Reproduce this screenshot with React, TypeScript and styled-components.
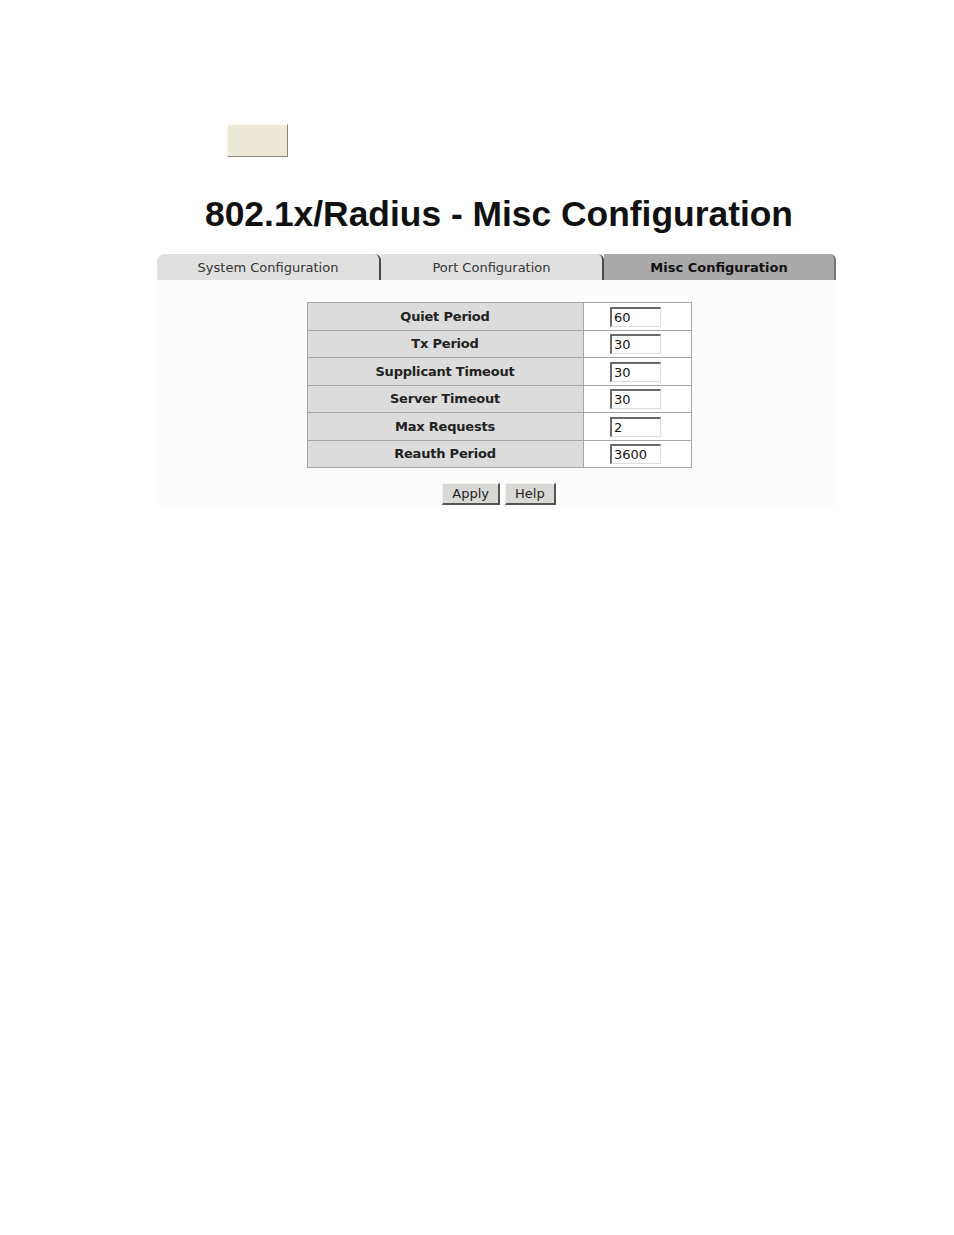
import styled, { createGlobalStyle } from "styled-components";

const Global = createGlobalStyle`
    body {
        margin: 0;
        background: #ffffff;
        font-family: "DejaVu Sans", Verdana, sans-serif;
    }
`;

const Page = styled.div`
    width: 954px;
    height: 1235px;
    padding-top: 124px;
    box-sizing: border-box;
`;

const TopButton = styled.div`
    margin-left: 227px;
    width: 61px;
    height: 33px;
    box-sizing: border-box;
    background: #ece9d8;
    border: 1px solid #f6f5ee;
    border-right-color: #8a877a;
    border-bottom-color: #8a877a;
`;

const Content = styled.div`
    margin-left: 157px;
    width: 680px;
    display: flex;
    flex-direction: column;
    align-items: center;
`;

const Title = styled.h1`
    margin: 33px 0 0 4px;
    height: 48px;
    font-family: "Liberation Sans", Arial, sans-serif;
    font-size: 35.4px;
    font-weight: 700;
    color: #111;
    line-height: 48px;
`;

const Tabs = styled.div`
    margin-top: 16px;
    width: 680px;
    display: flex;
`;

const Tab = styled.div<{ $active?: boolean; $first?: boolean }>`
    position: relative;
    flex: 0 0 ${(p) => (p.$first ? 224 : p.$active ? 232 : 223)}px;
    height: 26px;
    box-sizing: border-box;
    background: ${(p) => (p.$active ? "#a9a9a9" : "#e0e0e0")};
    border-top-left-radius: ${(p) => (p.$first ? "8px" : "0")};
    border-top-right-radius: 6px;
    border-right: 2px solid ${(p) => (p.$active ? "#777" : "#4a4a4a")};
    font-size: 13px;
    font-weight: ${(p) => (p.$active ? 700 : 400)};
    color: ${(p) => (p.$active ? "#111" : "#333")};
    display: flex;
    align-items: center;
    justify-content: center;
    padding-top: 1px;
`;

const Panel = styled.div`
    width: 680px;
    background: #fcfcfc;
    display: flex;
    flex-direction: column;
    align-items: center;
    padding: 22px 0 0;
    height: 226px;
    box-sizing: border-box;
`;

const Table = styled.table`
    margin-left: 4px;
    border-collapse: collapse;
    border: 1px solid #a6a6a6;
`;

const Row = styled.tr`
    height: 27.5px;
    border-bottom: 1px solid #a6a6a6;
`;

const Label = styled.td`
    width: 275px;
    padding: 0;
    background: #dcdcdc;
    border-right: 1px solid #a6a6a6;
    text-align: center;
    font-size: 13px;
    font-weight: 700;
    letter-spacing: -0.2px;
    color: #222;
`;

const Value = styled.td`
    width: 107px;
    padding: 0;
    background: #fff;
    text-align: center;
`;

const Field = styled.input`
    width: 51px;
    height: 20px;
    box-sizing: border-box;
    padding: 0 0 0 2px;
    margin: 0 0 0 -3px;
    border: 1px solid #dcdcdc;
    border-top: 2px solid #6a6a6a;
    border-left: 2px solid #6a6a6a;
    font-family: "DejaVu Sans", Verdana, sans-serif;
    font-size: 13px;
    color: #111;
    background: #fff;
    vertical-align: middle;
`;

const Buttons = styled.div`
    margin: 15px 0 0 4px;
    display: flex;
    gap: 5px;
`;

const Button = styled.button`
    height: 22px;
    padding: 0 9px;
    box-sizing: border-box;
    background: #d8d8d4;
    border: 1px solid #f2f2f2;
    border-right: 2px solid #555;
    border-bottom: 2px solid #555;
    font-family: "DejaVu Sans", Verdana, sans-serif;
    font-size: 13px;
    color: #222;
`;

const rows = [
    ["Quiet Period", "60"],
    ["Tx Period", "30"],
    ["Supplicant Timeout", "30"],
    ["Server Timeout", "30"],
    ["Max Requests", "2"],
    ["Reauth Period", "3600"],
];

export default function App() {
    return (
        <Page>
            <Global />
            <TopButton />
            <Content>
                <Title>802.1x/Radius - Misc Configuration</Title>
                <Tabs>
                    <Tab $first>System Configuration</Tab>
                    <Tab>Port Configuration</Tab>
                    <Tab $active>Misc Configuration</Tab>
                </Tabs>
                <Panel>
                    <Table>
                        <tbody>
                            {rows.map(([label, value]) => (
                                <Row key={label}>
                                    <Label>{label}</Label>
                                    <Value>
                                        <Field defaultValue={value} />
                                    </Value>
                                </Row>
                            ))}
                        </tbody>
                    </Table>
                    <Buttons>
                        <Button>Apply</Button>
                        <Button>Help</Button>
                    </Buttons>
                </Panel>
            </Content>
        </Page>
    );
}
